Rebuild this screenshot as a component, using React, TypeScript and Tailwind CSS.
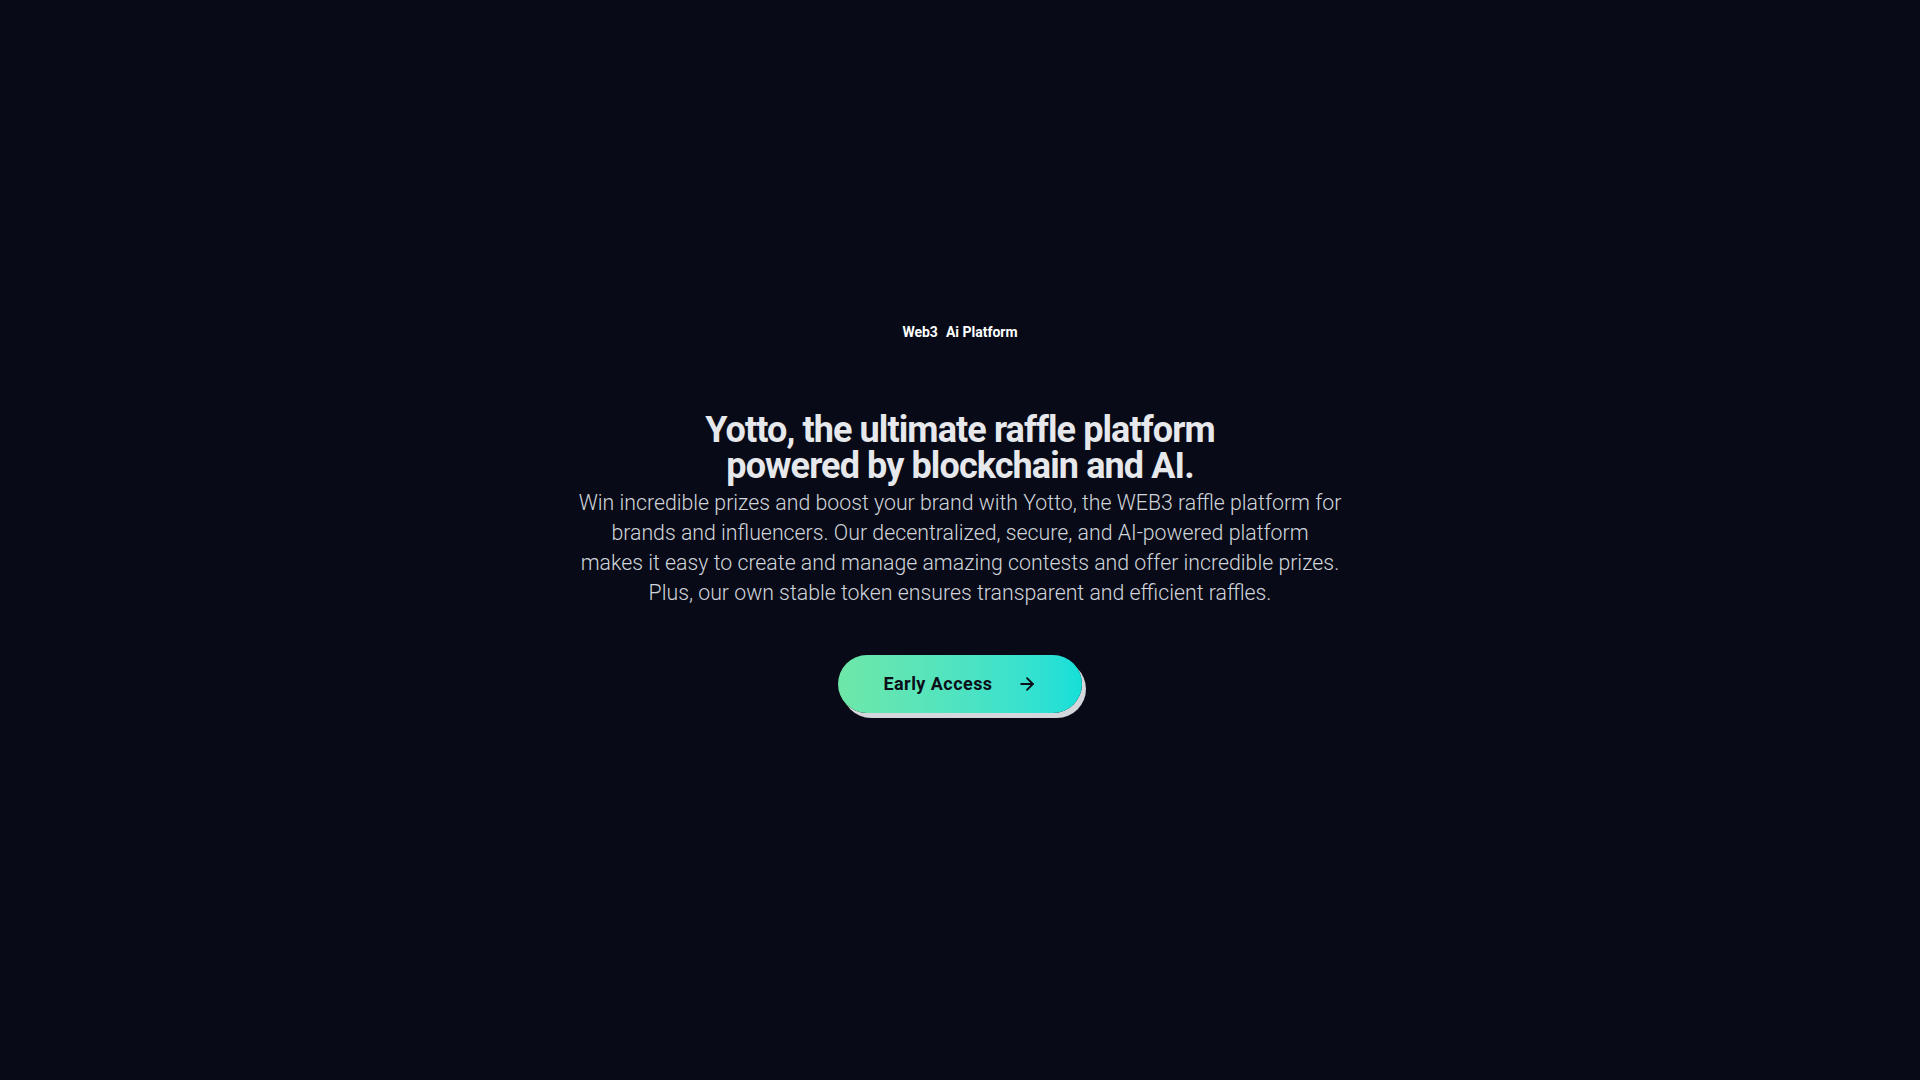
import React from 'react';
import { ArrowRight } from 'lucide-react';

function Badge() {
  return (
    <div className="flex items-center gap-2 text-sm font-bold text-white leading-5">
      <span>Web3</span>
      <span>Ai Platform</span>
    </div>
  );
}

function EarlyAccessButton() {
  return (
    <button className="flex items-center gap-[24px] h-[58px] px-[45px] rounded-full bg-gradient-to-r from-[#6ee7a8] to-[#13dfd9] text-[#0b0f17] text-lg font-bold tracking-wide shadow-[4px_5px_0_0_#d4d8dc]">
      <span>Early Access</span>
      <ArrowRight size={20} strokeWidth={2.2} />
    </button>
  );
}

export default function App() {
  return (
    <div className="min-h-screen w-full bg-[#080b17] font-['Roboto','Liberation_Sans',sans-serif]">
      <main className="flex flex-col items-center pt-[322px] pb-24">
        <Badge />
        <h1 className="mt-[70px] text-center text-4xl leading-9 font-bold tracking-tight text-[#e6e8ec]">
          Yotto, the ultimate raffle platform
          <br />
          powered by blockchain and AI.
        </h1>
        <p className="mt-[4px] text-center text-[21.3px] leading-[30px] font-light text-[#d0d4db]">
          Win incredible prizes and boost your brand with Yotto, the WEB3 raffle platform for
          <br />
          brands and influencers. Our decentralized, secure, and AI-powered platform
          <br />
          makes it easy to create and manage amazing contests and offer incredible prizes.
          <br />
          Plus, our own stable token ensures transparent and efficient raffles.
        </p>
        <div className="mt-[47px]">
          <EarlyAccessButton />
        </div>
      </main>
    </div>
  );
}
